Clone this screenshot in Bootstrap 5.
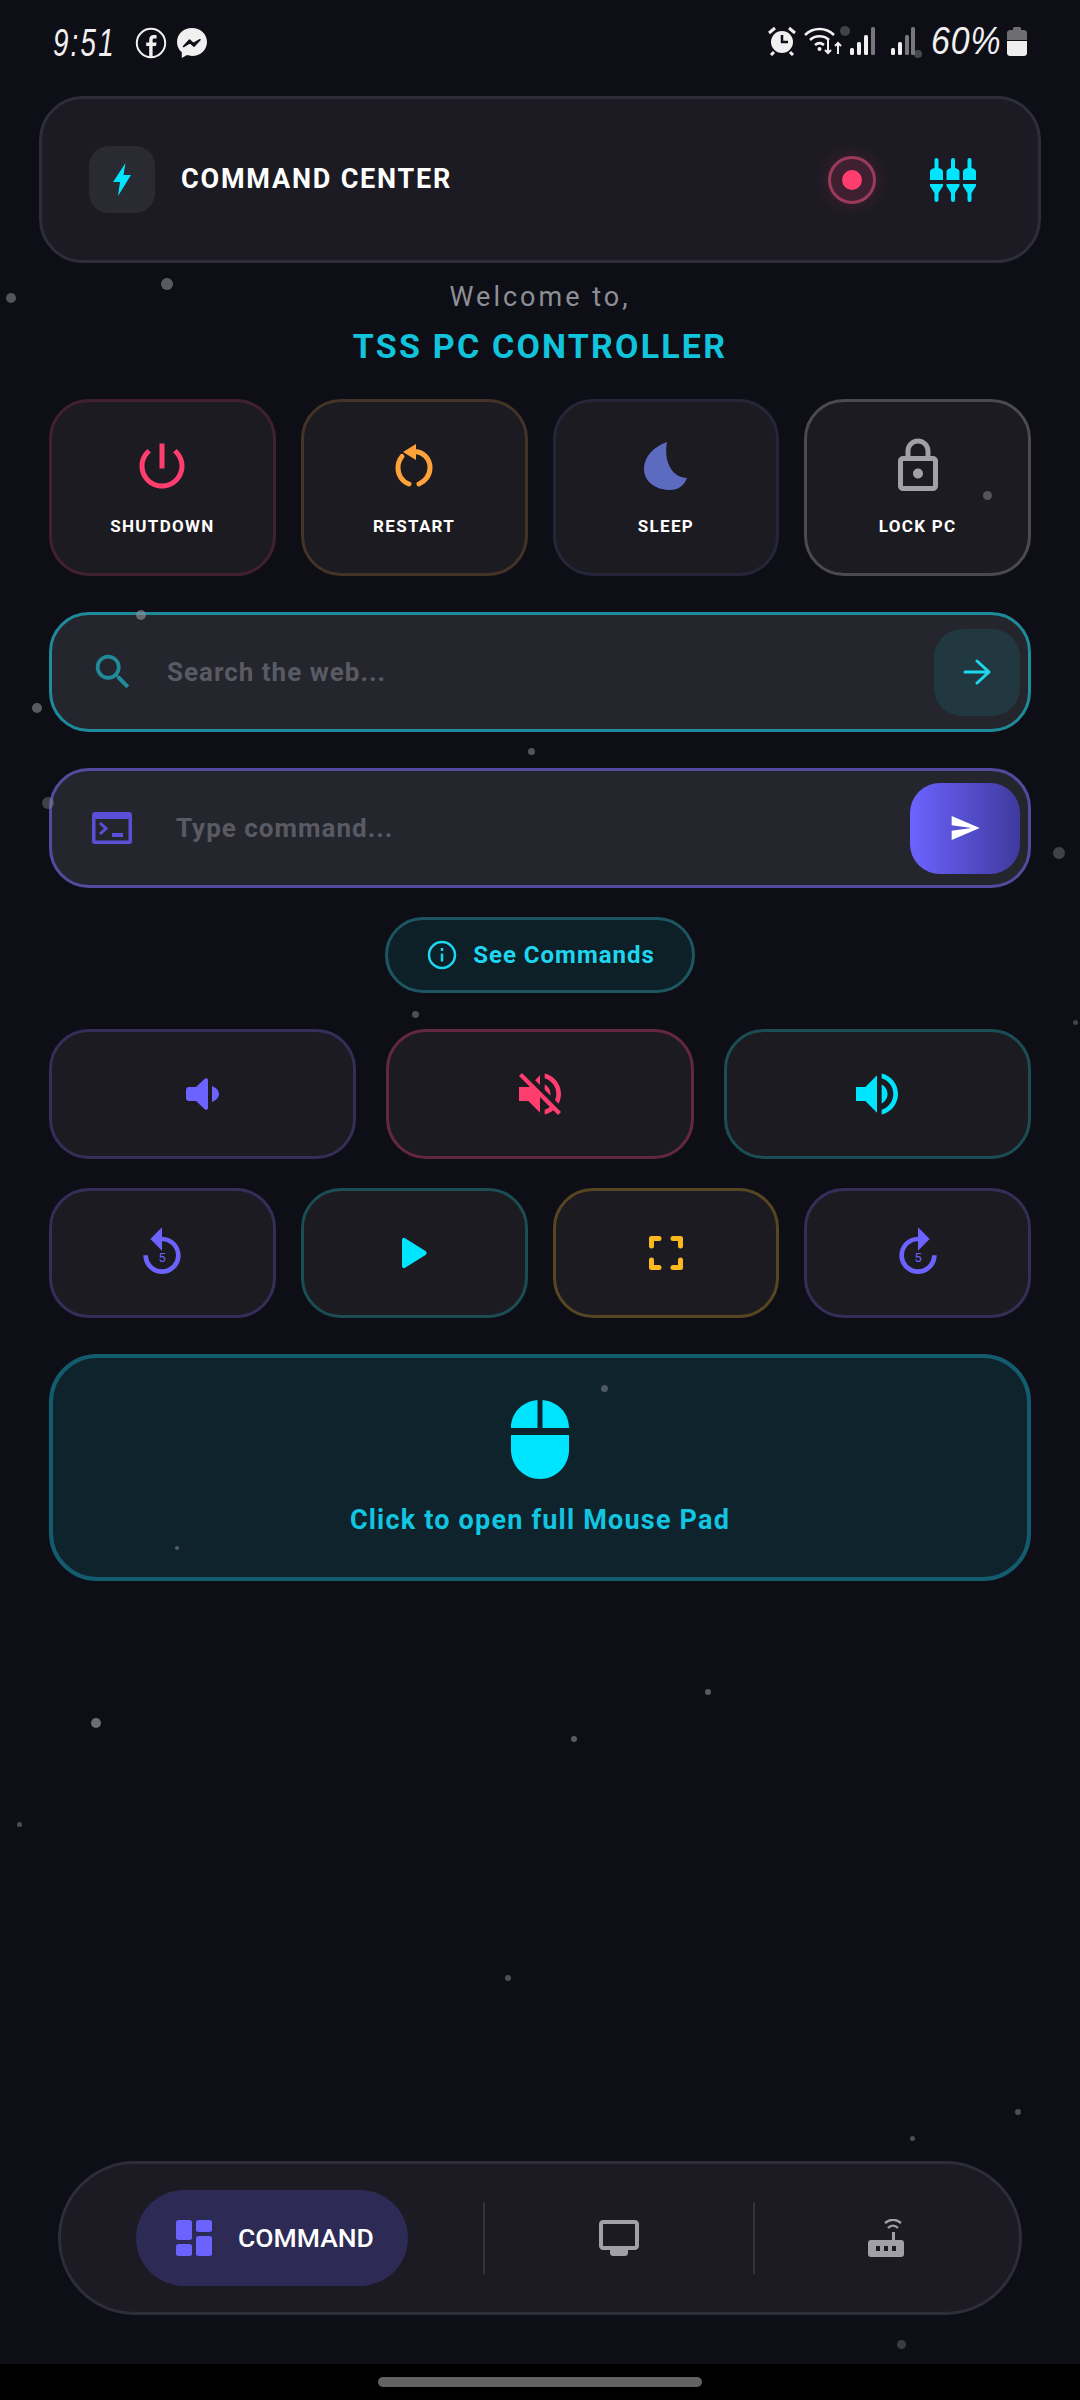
<!DOCTYPE html>
<html lang="en">
  <head>
    <meta charset="UTF-8" />
    <meta name="viewport" content="width=device-width, initial-scale=1.0" />
    <title>TSS PC Controller</title>
    <link href="https://cdn.jsdelivr.net/npm/bootstrap@5.3.0/dist/css/bootstrap.min.css" rel="stylesheet" />
    <style>
      html, body { height: 100%; margin: 0; background: #0e0e16; overflow: hidden; }
      body { font-family: Roboto, "Liberation Sans", sans-serif; color: #fff; }
      svg { display: block; flex: none; }

      #page { height: 2400px; }
      .statusbar { height: 96px; padding: 26px 53px 0 53px; }
      .hand { display: inline-block; font-family: "Liberation Sans", sans-serif; font-style: italic; font-size: 38px; line-height: 30px; color: #f0f0f0; transform-origin: left center; }
      .hand.time { width: 66px; letter-spacing: 3px; transform: scaleX(.73); }
      .hand.pct { width: 68px; letter-spacing: 1px; transform: scaleX(.89); }

      .topcard { margin: 0 39px; height: 167px; padding: 0 62px 0 47px; background: #1c1b23; border: 3px solid #2e2e38; border-radius: 44px; }
      .boltbox { width: 66px; height: 67px; border-radius: 20px; background: #2a2a32; }
      .toptitle { margin-left: 26px; font-size: 27px; font-weight: 700; letter-spacing: 1.8px; }
      .recdot { width: 48px; height: 48px; border-radius: 50%; border: 3px solid #9c3a5c; background: #3f2030; box-shadow: 0 0 18px rgba(255, 61, 110, .18); margin-right: 54px; }
      .recdot span { width: 20px; height: 20px; border-radius: 50%; background: #ff3d6e; }

      .welcome { margin-top: 19px; font-size: 27px; line-height: 30px; letter-spacing: 3px; color: #8e8e96; }
      .brandline { margin-top: 14px; font-size: 34px; line-height: 40px; font-weight: 700; letter-spacing: 2.2px; color: #12c3dc; }

      .rowwrap { margin: 0 49px; }
      .tiles4 { gap: 25px; }
      .tiles3 { gap: 30px; }
      .r-power { margin-top: 33px; }
      .tile.btn { flex: 1 1 0; min-width: 0; padding: 0; background: #1c1b22; border: 3px solid #333; border-radius: 40px; color: #fff; }
      .tile-power { height: 177px; }
      .tile-media { height: 130px; }
      .tile-label { margin-top: 24px; font-size: 17px; line-height: 20px; font-weight: 700; letter-spacing: 1.3px; }
      .iconslot { height: 52px; }
      .b-red { border-color: #42212f !important; }
      .b-orange { border-color: #433427 !important; }
      .b-indigo { border-color: #26263a !important; }
      .b-grey { border-color: #4a4a50 !important; }
      .b-violet { border-color: #342e59 !important; }
      .b-pink { border-color: #632840 !important; }
      .b-teal { border-color: #1a4e54 !important; }
      .b-amber { border-color: #574621 !important; }

      .inputbar { height: 120px; background: #25252e; border: 3px solid; border-radius: 40px; }
      .inputbar .form-control { background: transparent; border: 0; box-shadow: none; padding: 0; font-family: Roboto, sans-serif; font-size: 26px; font-weight: 700; letter-spacing: 1px; color: #fff; }
      .inputbar .form-control::placeholder { color: #5a5a63; opacity: 1; }
      .bar-search { margin-top: 36px; border-color: #1f8a99; padding: 0 8px 0 38px; }
      .bar-command { margin-top: 36px; border-color: #554a9e; padding: 0 8px 0 40px; }
      .gap-search { gap: 31px; }
      .gap-command { gap: 44px; }
      .gobtn.btn { width: 86px; height: 87px; padding: 0; border: 0; border-radius: 28px; background: #213840; }
      .sendbtn.btn { width: 110px; height: 91px; padding: 0; border: 0; border-radius: 30px; background: linear-gradient(90deg, #6c63ff, #3f3a9e); }

      .seebtn.btn { margin-top: 29px; width: 310px; height: 76px; padding: 0 0 0 2px; gap: 16px; border: 3px solid #1d5560; border-radius: 38px; background: #0d1f27; color: #1fd6f0; font-size: 24px; font-weight: 700; letter-spacing: 1px; }
      .r-vol { margin-top: 36px; }
      .r-med { margin-top: 29px; }
      .padbtn.btn { margin-top: 36px; height: 227px; width: 100%; padding: 0; background: #0e232c; border: 4px solid #125c6e; border-radius: 48px; color: #12c5e0; }
      .padlabel { margin-top: 25px; font-size: 27px; line-height: 32px; font-weight: 700; letter-spacing: 1.2px; }

      .dock { margin: auto 58px 49px; height: 154px; background: #1c1b23; border: 3px solid #2e2e38; border-radius: 77px; }
      .dock-a { width: 422px; }
      .dock-b { width: 268px; }
      .pill { width: 272px; height: 96px; gap: 26px; padding-left: 40px; border-radius: 48px; background: #2d2b55; font-size: 26.5px; font-weight: 500; color: #fff; }
      .dockrule { width: 2px; height: 72px; min-height: 72px; background: #33333c; opacity: 1; }
      .homebar { height: 36px; background: #000; flex: none; }
      .homebar span { width: 324px; height: 10px; margin-top: 13px; border-radius: 5px; background: #636363; }

      .speck { position: absolute; border-radius: 50%; background: #8e8e96; pointer-events: none; }
    </style>
  </head>
  <body>
    <div id="page" class="d-flex flex-column position-relative">
      <div class="statusbar d-flex justify-content-between align-items-start">
        <div class="d-flex align-items-center">
          <span class="hand time">9:51</span>
          <svg class="ms-3" width="32" height="32" viewBox="0 0 32 32" fill="none"><circle cx="16" cy="16" r="14.2" stroke="#f0f0f0" stroke-width="2" /><path d="M17.6 30V19h3.4l.5-3.6h-3.9v-2.2c0-1.1.4-1.7 1.8-1.7h2.2V8.3c-.6-.1-1.6-.2-2.8-.2-2.9 0-4.6 1.7-4.6 4.7v2.6h-3v3.6h3v11h3.4z" fill="#f0f0f0" /></svg>
          <svg class="ms-2" width="34" height="34" viewBox="0 0 34 34"><path d="M17 2C8.600 2 2 8.100 2 16c0 4.200 1.800 7.800 4.800 10.300V32l5.200-2.900c1.600.5 3.300.8 5 .8 8.400 0 15-6.100 15-14S25.400 2 17 2z" fill="#f0f0f0" /><path d="M8.500 20.500l6-6.500 4 3.500 6.500-3.800-6 6.500-4-3.500z" fill="#0e0e16" stroke="#0e0e16" stroke-width="1.500" stroke-linejoin="round" /></svg>
        </div>
        <div class="d-flex align-items-center">
          <svg width="28" height="30" viewBox="0 0 28 30"><circle cx="14" cy="16" r="11" fill="#f0f0f0" /><path d="M14 9v7h6" fill="none" stroke="#0e0e16" stroke-width="2.500" /><path d="M1 7l6-5M27 7l-6-5M6 26l-3 3M22 26l3 3" stroke="#f0f0f0" stroke-width="3" /></svg>
          <svg class="ms-2" width="38" height="30" viewBox="0 0 38 30" fill="none"><g stroke="#f0f0f0" stroke-width="2.500"><path d="M1 9c8-8 21-8 29 0" /><path d="M6 14c5-5 14-5 19 0" /><path d="M11 19c3-2.500 6-2.500 9 0" /></g><circle cx="15.500" cy="23" r="2" fill="#f0f0f0" /><path d="M24 14v13m-3-3l3 3 3-3M34 28V17m-3 3l3-3 3 3" stroke="#f0f0f0" stroke-width="2" /></svg>
          <svg class="ms-2" width="25" height="28" viewBox="0 0 25 28"><rect y="21" width="4" height="7" rx="1.500" fill="#f0f0f0" /><rect x="7" y="15" width="4" height="13" rx="1.500" fill="#f0f0f0" /><rect x="14" y="8" width="4" height="20" rx="1.500" fill="#f0f0f0" /><rect x="21" y="0" width="4" height="28" rx="1.500" fill="#77777d" /></svg>
          <svg class="ms-3" width="24" height="28" viewBox="0 0 24 28"><rect y="21" width="4" height="7" rx="1.500" fill="#f0f0f0" /><rect x="7" y="15" width="4" height="13" rx="1.500" fill="#f0f0f0" /><rect x="14" y="8" width="4" height="20" rx="1.500" fill="#77777d" /><rect x="20" y="0" width="4" height="28" rx="1.500" fill="#77777d" /></svg>
          <span class="hand pct ms-3">60%</span>
          <svg class="ms-2" width="20" height="30" viewBox="0 0 20 30"><path d="M6 2.500c0-1 .8-1.500 1.500-1.500h5c.7 0 1.500.5 1.500 1.500V4h3c1.500 0 3 1 3 3v7H0V7c0-2 1.500-3 3-3h3z" fill="#6d6d72" /><path d="M0 15h20v12c0 2-1.500 3-3 3H3c-1.500 0-3-1-3-3z" fill="#eee" /></svg>
        </div>
      </div>

      <header class="topcard d-flex align-items-center">
        <div class="boltbox d-flex align-items-center justify-content-center">
          <svg width="18" height="33" viewBox="0 0 18 33"><path d="M12.500 0L0 19h7L5 33 18 12h-7.500z" fill="#00e5ff" /></svg>
        </div>
        <div class="toptitle">COMMAND CENTER</div>
        <div class="recdot d-flex align-items-center justify-content-center ms-auto"><span></span></div>
        <svg width="46" height="44" viewBox="0 0 46 44" fill="#00e5ff">
          <g id="fader">
            <path d="M4.500 2a2 2 0 0 1 4 0v8l1.500.5c1.700.5 3 1.500 3 3V22H0v-8.500c0-1.500 1.300-2.500 3-3L4.500 10z" />
            <path d="M0 26h13v2l-4.500 7v7a2 2 0 0 1-4 0v-7L0 28z" />
          </g>
          <use href="#fader" x="16.500" />
          <use href="#fader" x="33" />
        </svg>
      </header>

      <div class="welcome text-center">Welcome to,</div>
      <div class="brandline text-center">TSS PC CONTROLLER</div>

      <div class="rowwrap tiles4 r-power d-flex">
        <button class="btn tile tile-power b-red d-flex flex-column align-items-center justify-content-center">
          <span class="iconslot d-flex align-items-center"><svg width="60" height="60" viewBox="0 0 24 24" fill="#ff3d6e"><path d="M13 3h-2v10h2V3zm4.830 2.170l-1.420 1.420C17.990 7.860 19 9.810 19 12c0 3.870-3.130 7-7 7s-7-3.130-7-7c0-2.190 1.010-4.140 2.580-5.420L6.170 5.170C4.230 6.820 3 9.260 3 12c0 4.970 4.030 9 9 9s9-4.030 9-9c0-2.740-1.230-5.180-3.170-6.830z" /></svg></span>
          <span class="tile-label">SHUTDOWN</span>
        </button>
        <button class="btn tile tile-power b-orange d-flex flex-column align-items-center justify-content-center">
          <span class="iconslot d-flex align-items-center"><svg width="40" height="44" viewBox="0 0 40 44" fill="none"><path d="M21 7.500c8 .5 15 7 15 16 0 8-5 14-11 16.500M15 40C8 37.500 4 31 4 23.500c0-4 1.500-8 4-11" stroke="#ffa23a" stroke-width="5" stroke-linecap="round" /><path d="M22 0L9 8l13 8z" fill="#ffa23a" /></svg></span>
          <span class="tile-label">RESTART</span>
        </button>
        <button class="btn tile tile-power b-indigo d-flex flex-column align-items-center justify-content-center">
          <span class="iconslot d-flex align-items-center"><svg width="43" height="48" viewBox="0 0 43 48" fill="#5c6bc0"><path d="M23 0C9 5 0 15 0 27c0 12 11 21 26 21 8 0 14-4 17-12C30 36 19 22 23 0z" /></svg></span>
          <span class="tile-label">SLEEP</span>
        </button>
        <button class="btn tile tile-power b-grey d-flex flex-column align-items-center justify-content-center">
          <span class="iconslot d-flex align-items-center"><svg width="60" height="60" viewBox="0 0 24 24" fill="#a0a0a6"><path d="M18 8h-1V6c0-2.760-2.240-5-5-5S7 3.240 7 6v2H6c-1.100 0-2 .900-2 2v10c0 1.100.900 2 2 2h12c1.100 0 2-.900 2-2V10c0-1.100-.900-2-2-2zM9 6c0-1.660 1.340-3 3-3s3 1.340 3 3v2H9V6zm9 14H6V10h12v10zm-6-3c1.100 0 2-.900 2-2s-.900-2-2-2-2 .900-2 2 .900 2 2 2z" /></svg></span>
          <span class="tile-label">LOCK PC</span>
        </button>
      </div>

      <div class="rowwrap inputbar bar-search gap-search d-flex align-items-center">
        <svg width="46" height="46" viewBox="0 0 24 24" fill="#1f8a99"><path d="M15.500 14h-.790l-.280-.270C15.410 12.590 16 11.110 16 9.500 16 5.910 13.090 3 9.500 3S3 5.910 3 9.500 5.910 16 9.500 16c1.610 0 3.090-.590 4.230-1.570l.270.280v.790l5 4.990L20.490 19l-4.990-5zm-6 0C7.010 14 5 11.990 5 9.500S7.010 5 9.500 5 14 7.010 14 9.500 11.990 14 9.500 14z" /></svg>
        <input class="form-control" type="text" placeholder="Search the web..." />
        <button class="btn gobtn d-flex align-items-center justify-content-center flex-shrink-0">
          <svg width="28" height="26" viewBox="0 0 28 26" fill="none" stroke="#1fd6f0" stroke-width="3" stroke-linecap="round" stroke-linejoin="round"><path d="M2 13h24M14 2l12 11-12 11" /></svg>
        </button>
      </div>

      <div class="rowwrap inputbar bar-command gap-command d-flex align-items-center">
        <svg width="40" height="32" viewBox="0 0 40 32"><rect width="40" height="32" rx="3" fill="#5a50d8" /><rect x="3.500" y="7" width="33" height="21.500" fill="#25252e" /><path d="M8 11l6 5.500L8 22" fill="none" stroke="#5a50d8" stroke-width="3" /><rect x="20" y="21" width="11" height="4" fill="#5a50d8" /></svg>
        <input class="form-control" type="text" placeholder="Type command..." />
        <button class="btn sendbtn d-flex align-items-center justify-content-center flex-shrink-0">
          <svg width="32" height="32" viewBox="0 0 24 24" fill="#fff"><path d="M2.010 21L23 12 2.010 3 2 10l15 2-15 2z" /></svg>
        </button>
      </div>

      <div class="text-center">
        <button class="btn seebtn d-inline-flex align-items-center justify-content-center">
          <svg width="30" height="30" viewBox="0 0 30 30" fill="none" stroke="#1fd6f0" stroke-width="2.500"><circle cx="15" cy="15" r="13" /><path d="M15 13.500v8" /><path d="M15 8v3" /></svg>
          See Commands
        </button>
      </div>

      <div class="rowwrap tiles3 r-vol d-flex">
        <button class="btn tile tile-media b-violet d-flex align-items-center justify-content-center">
          <svg width="33" height="32" viewBox="0 0 33 32" fill="#6c63ff"><path d="M3 9h7l9-8.400c1-1 3-.3 3 1.400v28c0 1.700-2 2.400-3 1.400L10 23H3c-1.700 0-3-1.300-3-3v-8c0-1.700 1.300-3 3-3zM26 8c4 1.500 7 4.500 7 8s-3 6.500-7 8z" /></svg>
        </button>
        <button class="btn tile tile-media b-pink d-flex align-items-center justify-content-center">
          <svg width="56" height="56" viewBox="0 0 24 24" fill="#ff3d6e"><path d="M16.500 12c0-1.770-1.020-3.290-2.500-4.030v2.210l2.450 2.450c.030-.200.050-.410.050-.630zm2.500 0c0 .940-.200 1.820-.54 2.640l1.510 1.510C20.630 14.910 21 13.500 21 12c0-4.280-2.990-7.860-7-8.770v2.060c2.890.860 5 3.540 5 6.710zM4.270 3L3 4.270 7.730 9H3v6h4l5 5v-6.730l4.250 4.250c-.670.520-1.420.930-2.250 1.180v2.060c1.380-.310 2.630-.950 3.690-1.810L19.730 21 21 19.730l-9-9L4.270 3zM12 4L9.910 6.090 12 8.180V4z" /></svg>
        </button>
        <button class="btn tile tile-media b-teal d-flex align-items-center justify-content-center">
          <svg width="56" height="56" viewBox="0 0 24 24" fill="#00e5ff"><path d="M3 9v6h4l5 5V4L7 9H3zm13.500 3c0-1.770-1.020-3.290-2.500-4.030v8.050c1.480-.730 2.500-2.250 2.500-4.020zM14 3.230v2.060c2.890.860 5 3.540 5 6.710s-2.110 5.850-5 6.710v2.060c4.010-.910 7-4.490 7-8.770s-2.990-7.860-7-8.770z" /></svg>
        </button>
      </div>

      <div class="rowwrap tiles4 r-med d-flex">
        <button class="btn tile tile-media b-violet d-flex align-items-center justify-content-center">
          <svg width="56" height="56" viewBox="0 0 24 24" fill="#6c63ff"><path d="M12 5V1L7 6l5 5V7c3.310 0 6 2.690 6 6s-2.690 6-6 6-6-2.690-6-6H4c0 4.420 3.580 8 8 8s8-3.580 8-8-3.580-8-8-8z" /><text x="12" y="15.700" font-family="Roboto, sans-serif" font-size="5.500" text-anchor="middle">5</text></svg>
        </button>
        <button class="btn tile tile-media b-teal d-flex align-items-center justify-content-center">
          <svg width="26" height="32" viewBox="0 0 26 32" fill="#00e5ff"><path d="M1 3c0-2 2-3 3.500-1.600l20 12.500c1.500 1 1.500 3 0 4l-20 12.500C3 32 1 31 1 29z" /></svg>
        </button>
        <button class="btn tile tile-media b-amber d-flex align-items-center justify-content-center">
          <svg width="34" height="34" viewBox="0 0 34 34" fill="none" stroke="#fbb81f" stroke-width="5" stroke-linecap="round" stroke-linejoin="round"><path d="M2.500 10V2.500H10M24 2.500h7.500V10M31.500 24v7.500H24M10 31.500H2.500V24" /></svg>
        </button>
        <button class="btn tile tile-media b-violet d-flex align-items-center justify-content-center">
          <svg width="56" height="56" viewBox="0 0 24 24" fill="#6c63ff"><path d="M12 5V1l5 5-5 5V7c-3.310 0-6 2.690-6 6s2.690 6 6 6 6-2.690 6-6h2c0 4.420-3.580 8-8 8s-8-3.580-8-8 3.580-8 8-8z" /><text x="12" y="15.700" font-family="Roboto, sans-serif" font-size="5.500" text-anchor="middle">5</text></svg>
        </button>
      </div>

      <div class="rowwrap">
        <button class="btn padbtn d-flex flex-column align-items-center justify-content-center">
          <svg width="58" height="80" viewBox="0 0 58 80" fill="#00e5ff"><path d="M26.500 1C11 2.500 0 14 0 29h26.500zM31.500 1C47 2.500 58 14 58 29H31.500zM0 36h58v15c0 16-13 29-29 29S0 67 0 51z" /></svg>
          <span class="padlabel">Click to open full Mouse Pad</span>
        </button>
      </div>

      <nav class="dock d-flex align-items-center">
        <div class="dock-a d-flex justify-content-center">
          <div class="pill d-flex align-items-center">
            <svg width="36" height="36" viewBox="0 0 36 36" fill="#6c63ff"><rect width="16" height="20" rx="2.500" /><rect y="24" width="16" height="12" rx="2.500" /><rect x="20" width="16" height="12" rx="2.500" /><rect x="20" y="16" width="16" height="20" rx="2.500" /></svg>
            <span>COMMAND</span>
          </div>
        </div>
        <div class="vr dockrule align-self-center"></div>
        <div class="dock-b d-flex justify-content-center">
          <svg width="40" height="36" viewBox="0 0 40 36" fill="#a0a0a6"><path d="M4 0h32c2.200 0 4 1.800 4 4v22c0 2.200-1.800 4-4 4H4c-2.200 0-4-1.800-4-4V4c0-2.200 1.800-4 4-4zm0 4v22h32V4z" fill-rule="evenodd" /><path d="M11 30h18v3c0 1.700-1.300 3-3 3H14c-1.700 0-3-1.300-3-3z" /></svg>
        </div>
        <div class="vr dockrule align-self-center"></div>
        <div class="flex-fill d-flex justify-content-center">
          <svg width="38" height="38" viewBox="0 0 38 38" fill="#a0a0a6"><rect y="21" width="36" height="17" rx="3" /><rect x="24" y="13" width="3" height="9" /><path d="M20 9c3-3 7-3 10 0M17 4c5-4 11-4 16 0" fill="none" stroke="#a0a0a6" stroke-width="2.400" /><g fill="#1c1b23"><rect x="8" y="27" width="4" height="5" /><rect x="16" y="27" width="4" height="5" /><rect x="24" y="27" width="4" height="5" /></g></svg>
        </div>
      </nav>

      <div class="homebar d-flex justify-content-center"><span></span></div>

      <div id="specks"></div>
    </div>

    <script src="https://cdn.jsdelivr.net/npm/bootstrap@5.3.0/dist/js/bootstrap.bundle.min.js"></script>
    <script>
      var specks = [
        [845, 31, 5, 0.4], [918, 54, 4, 0.45], [11, 298, 5, 0.55], [167, 284, 6, 0.6], [141, 615, 5, 0.65],
        [37, 708, 5, 0.6], [531, 751, 3.5, 0.55], [48, 803, 6, 0.4], [1059, 853, 6, 0.4], [987, 495, 4.5, 0.5],
        [415, 1014, 3.5, 0.5], [1075, 1022, 2.5, 0.4], [604, 1388, 3.5, 0.5], [177, 1548, 2.2, 0.55],
        [708, 1692, 3, 0.6], [96, 1723, 5, 0.75], [574, 1739, 3, 0.6], [19, 1824, 2.5, 0.5], [508, 1978, 3, 0.5],
        [912, 2138, 2.5, 0.5], [1018, 2112, 3, 0.5], [901, 2344, 4.5, 0.35]
      ];
      var holder = document.getElementById("specks");
      specks.forEach(function (s) {
        var d = document.createElement("div");
        d.className = "speck";
        d.style.left = s[0] - s[2] + "px";
        d.style.top = s[1] - s[2] + "px";
        d.style.width = d.style.height = s[2] * 2 + "px";
        d.style.opacity = s[3];
        holder.appendChild(d);
      });
    </script>
  </body>
</html>
